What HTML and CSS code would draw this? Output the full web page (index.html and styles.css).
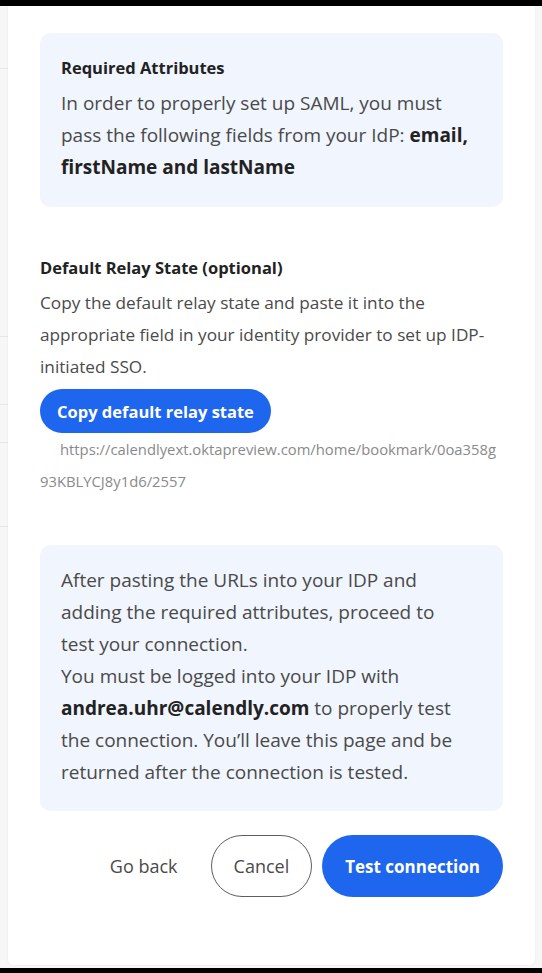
FILE: index.html
```html
<!DOCTYPE html>
<html lang="en">
<head>
  <meta charset="UTF-8">
  <meta name="viewport" content="width=device-width, initial-scale=1.0">
  <title>SAML Setup</title>
  <link rel="stylesheet" href="styles.css">
</head>
<body>

  <div class="screen">
    <div class="backdrop">
      <span class="bg-line l1"></span>
      <span class="bg-line l2"></span>
      <span class="bg-line l3"></span>
      <span class="bg-line l4"></span>
      <span class="bg-line l5"></span>
    </div>

    <div class="modal">
      <div class="info-card">
        <h4>Required Attributes</h4>
        <p>In order to properly set up SAML, you must pass the following fields from your IdP: <strong>email, firstName and lastName</strong></p>
      </div>

      <div class="relay">
        <h4>Default Relay State (optional)</h4>
        <p>Copy the default relay state and paste it into the appropriate field in your identity provider to set up IDP-initiated SSO.</p>
        <button class="btn btn-primary btn-small">Copy default relay state</button>
        <div class="relay-url">https://calendlyext.oktapreview.com/home/bookmark/0oa358g<wbr>93KBLYCJ8y1d6/2557</div>
      </div>

      <div class="info-card test-card">
        <p>After pasting the URLs into your IDP and adding the required attributes, proceed to test your connection.<br>
        You must be logged into your IDP with <strong>andrea.uhr@calendly.com</strong> to properly test the connection. You’ll leave this page and be returned after the connection is tested.</p>
      </div>

      <div class="actions">
        <button class="btn btn-link">Go back</button>
        <button class="btn btn-outline">Cancel</button>
        <button class="btn btn-primary">Test connection</button>
      </div>
    </div>
  </div>

</body>
</html>
```

FILE: styles.css
```css
body {
  margin: 0;
  padding: 0;
  background-color: #000;
  font-family: "Open Sans", Arial, sans-serif;
  color: #4a4a4a;
}

.screen {
  position: relative;
  margin-top: 6px;
  height: 962px;
  background-color: #f7f7f7;
  padding: 0 7px 0 8px;
  overflow: hidden;
}

.backdrop {
  position: absolute;
  inset: 0;
}

.bg-line {
  position: absolute;
  left: 0;
  width: 8px;
  height: 1px;
  background-color: #e6e6e6;
}

.l1 { top: 62px; }
.l2 { top: 330px; }
.l3 { top: 398px; }
.l4 { top: 436px; }
.l5 { top: 520px; }

.modal {
  position: relative;
  height: 959px;
  box-sizing: border-box;
  background-color: #fff;
  border-radius: 0 0 6px 6px;
  padding: 27px 32px 0;
  box-shadow: 0 0 3px rgba(0, 0, 0, 0.06);
}

.info-card {
  background-color: #f0f5fe;
  border-radius: 10px;
  padding: 22px 16px 24px 21px;
}

h4 {
  margin: 0;
  font-size: 16.5px;
  line-height: 26px;
  font-weight: 700;
  color: #222;
}

.info-card p {
  margin: 6px 0 0;
  font-size: 19px;
  line-height: 32px;
}

strong {
  font-weight: 700;
  color: #222;
}

.relay {
  margin-top: 48px;
}

.relay p {
  margin: 6px 0 6px;
  font-size: 17.2px;
  line-height: 32px;
}

.relay-url {
  font-size: 14.8px;
  line-height: 32px;
  color: #8a8a8a;
  text-indent: 20px;
}

.test-card {
  margin-top: 48px;
  padding: 19px 35px 23px 21px;
}

.test-card p {
  margin: 0;
}

.btn {
  font-family: inherit;
  border: none;
  border-radius: 999px;
  cursor: pointer;
  font-size: 18px;
  background: none;
}

.btn-small {
  height: 44px;
  padding: 0 17px;
  font-size: 16.5px;
}

.btn-primary {
  background-color: #1f66ef;
  color: #fff;
  font-weight: 700;
}

.actions {
  margin-top: 24px;
  display: flex;
  justify-content: flex-end;
  gap: 10px;
}

.actions .btn {
  height: 62px;
  padding: 0 23px;
}

.actions .btn-primary {
  font-size: 17px;
}

.actions .btn-outline {
  padding: 0 22px;
}

.btn-link {
  color: #4a4a4a;
}

.btn-outline {
  border: 1.5px solid #5e5e5e;
  color: #4a4a4a;
}
```
